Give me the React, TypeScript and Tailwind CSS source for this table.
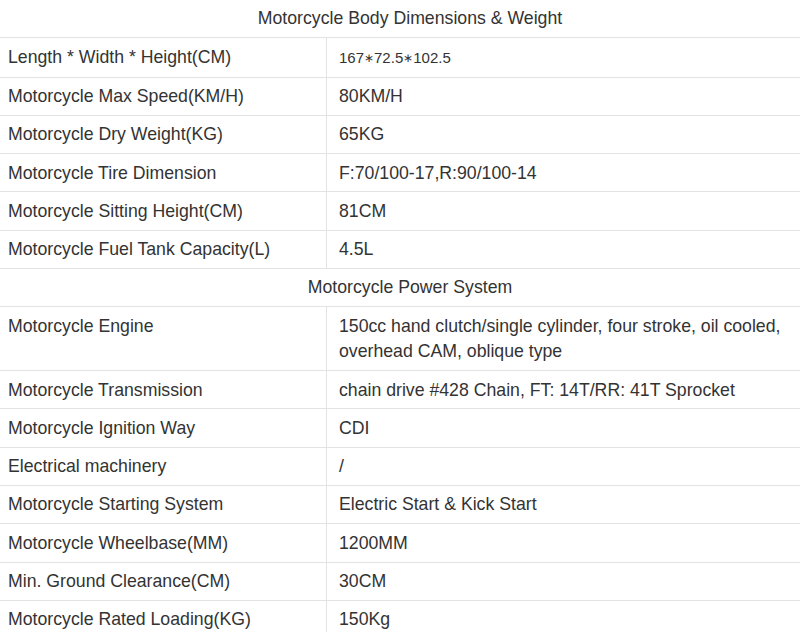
import React from "react";

type Row = { k: string; v: React.ReactNode; small?: boolean } | { h: string };

const Star = () => <span className="text-[12px] align-[1px]">∗</span>;

const rows: Row[] = [
  { h: "Motorcycle Body Dimensions & Weight" },
  {
    k: "Length * Width * Height(CM)",
    v: (
      <>
        167<Star />72.5<Star />102.5
      </>
    ),
    small: true,
  },
  { k: "Motorcycle Max Speed(KM/H)", v: "80KM/H" },
  { k: "Motorcycle Dry Weight(KG)", v: "65KG" },
  { k: "Motorcycle Tire Dimension", v: "F:70/100-17,R:90/100-14" },
  { k: "Motorcycle Sitting Height(CM)", v: "81CM" },
  { k: "Motorcycle Fuel Tank Capacity(L)", v: "4.5L" },
  { h: "Motorcycle Power System" },
  { k: "Motorcycle Engine", v: "150cc hand clutch/single cylinder, four stroke, oil cooled, overhead CAM, oblique type" },
  { k: "Motorcycle Transmission", v: "chain drive #428 Chain, FT: 14T/RR: 41T Sprocket" },
  { k: "Motorcycle Ignition Way", v: "CDI" },
  { k: "Electrical machinery", v: "/" },
  { k: "Motorcycle Starting System", v: "Electric Start & Kick Start" },
  { k: "Motorcycle Wheelbase(MM)", v: "1200MM" },
  { k: "Min. Ground Clearance(CM)", v: "30CM" },
  { k: "Motorcycle Rated Loading(KG)", v: "150Kg" },
];

export default function App() {
  return (
    <div
      className="w-[800px] h-[632px] overflow-hidden bg-white text-[#333] text-[17.7px] leading-[25.6px]"
      style={{ fontFamily: '"Liberation Sans", Arial, sans-serif' }}
    >
      {rows.map((r, i) =>
        "h" in r ? (
          <div key={i} className="border-b border-[#e3e3e3] pt-[6.4px] pb-[5.3px] pl-[20px] text-center">
            {r.h}
          </div>
        ) : (
          <div key={i} className="flex border-b border-[#e3e3e3]">
            <div className="w-[327px] shrink-0 border-r border-[#e3e3e3] pl-[8px] pr-2 pt-[6.4px] pb-[5.3px]">{r.k}</div>
            <div className={"flex-1 pl-[12px] pr-2 pt-[6.4px] pb-[5.3px] " + (r.small ? "text-[15px]" : "")}>{r.v}</div>
          </div>
        )
      )}
    </div>
  );
}
